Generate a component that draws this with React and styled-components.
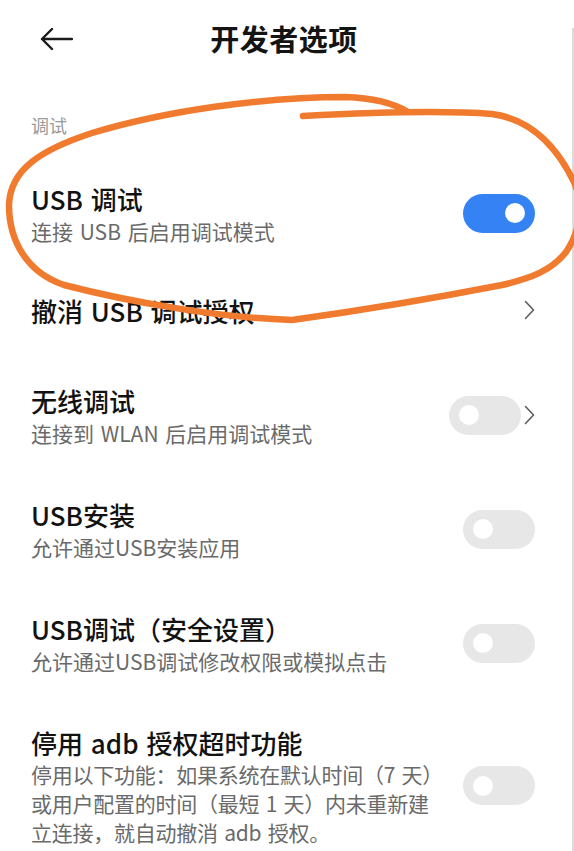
import React from 'react';
import styled, { createGlobalStyle } from 'styled-components';

const Global = createGlobalStyle`
  html, body { margin: 0; padding: 0; background: #ffffff; }
  body { font-family: "Noto Sans CJK SC", "Noto Sans", sans-serif; -webkit-font-smoothing: antialiased; }
  * { box-sizing: border-box; }
`;

const Page = styled.div`
  position: relative;
  width: 574px;
  height: 851px;
  overflow: hidden;
  background: #ffffff;
  color: #111111;
`;

const TopBar = styled.header`
  height: 76px;
  display: grid;
  grid-template-columns: 1fr auto 1fr;
  align-items: center;
  padding: 0 0 0 40px;
`;

const BackButton = styled.button`
  justify-self: start;
  display: flex;
  align-items: center;
  border: 0;
  background: none;
  padding: 0;
  margin-top: 2px;
  color: #1a1a1a;
`;

const Title = styled.h1`
  margin: 0 0 0 -46px;
  font-size: 29px;
  line-height: 40px;
  font-weight: 600;
  letter-spacing: 0.5px;
  color: #141414;
`;

const SectionHeader = styled.div`
  padding: 37px 31px 19px;
  font-size: 18px;
  line-height: 24px;
  color: #9a9a9a;
`;

const Row = styled.div`
  display: flex;
  align-items: center;
  gap: 12px;
  min-height: 88px;
  padding: ${(p) => (p.$single ? '20.5px 39px 28.5px 31px' : '24.5px 39px 24.5px 31px')};
`;

const Texts = styled.div`
  flex: 1;
  min-width: 0;
`;

const RowTitle = styled.div`
  font-size: 26px;
  line-height: 35px;
  font-weight: 500;
  word-spacing: 2px;
  color: #121212;
  white-space: nowrap;
`;

const RowSub = styled.div`
  font-size: 21px;
  line-height: ${(p) => (p.$multi ? '29px' : '30px')};
  letter-spacing: ${(p) => (p.$multi ? '-0.25px' : '0')};
  word-spacing: 2px;
  color: #6a6a6a;
  white-space: nowrap;
`;

const Controls = styled.div`
  display: flex;
  align-items: center;
  gap: 3px;
`;

const Toggle = styled.span`
  position: relative;
  display: block;
  width: 72px;
  height: 39px;
  border-radius: 20px;
  background: ${(p) => (p.$on ? '#3482f4' : '#e7e7e7')};
  &::after {
    content: '';
    position: absolute;
    top: 9.5px;
    ${(p) => (p.$on ? 'right: 10px;' : 'left: 10px;')}
    width: 20px;
    height: 20px;
    border-radius: 50%;
    background: #ffffff;
  }
`;

const EdgeLine = styled.div`
  position: absolute;
  top: 28px;
  right: 0;
  bottom: 0;
  width: 2px;
  background: #dcdcdc;
`;

const Annotation = styled.svg`
  position: absolute;
  left: 0;
  top: 0;
  width: 574px;
  height: 851px;
  pointer-events: none;
`;

const BackArrow = () => (
  <svg width="33" height="24" viewBox="0 0 33 24" fill="none">
    <path d="M2 12 H32 M12 2 L2 12 L12 22" stroke="currentColor" strokeWidth="2.4" strokeLinecap="round" strokeLinejoin="round" />
  </svg>
);

const Chevron = () => (
  <svg width="11" height="20" viewBox="0 0 11 20" fill="none">
    <path d="M1.5 1.5 L9.5 10 L1.5 18.5" stroke="#5e5e5e" strokeWidth="1.6" strokeLinecap="round" strokeLinejoin="round" />
  </svg>
);

const rows = [
  { title: 'USB 调试', sub: ['连接 USB 后启用调试模式'], toggle: true, on: true },
  { title: '撤消 USB 调试授权', sub: [], chevron: true },
  { title: '无线调试', sub: ['连接到 WLAN 后启用调试模式'], toggle: true, on: false, chevron: true },
  { title: 'USB安装', sub: ['允许通过USB安装应用'], toggle: true, on: false },
  { title: 'USB调试（安全设置）', sub: ['允许通过USB调试修改权限或模拟点击'], toggle: true, on: false },
  {
    title: '停用 adb 授权超时功能',
    sub: ['停用以下功能：如果系统在默认时间（7 天）', '或用户配置的时间（最短 1 天）内未重新建', '立连接，就自动撤消 adb 授权。'],
    toggle: true,
    on: false,
  },
];

export default function App() {
  return (
    <Page>
      <Global />
      <TopBar>
        <BackButton aria-label="返回">
          <BackArrow />
        </BackButton>
        <Title>开发者选项</Title>
        <span />
      </TopBar>
      <SectionHeader>调试</SectionHeader>
      {rows.map((r) => (
        <Row key={r.title} $single={r.sub.length === 0}>
          <Texts>
            <RowTitle>{r.title}</RowTitle>
            {r.sub.map((s) => (
              <RowSub key={s} $multi={r.sub.length > 1}>{s}</RowSub>
            ))}
          </Texts>
          <Controls>
            {r.toggle && <Toggle $on={r.on} />}
            {r.chevron && <Chevron />}
          </Controls>
        </Row>
      ))}
      <EdgeLine />
      <Annotation viewBox="0 0 574 851">
        <path
          d="M303 116 C 360 113, 440 110, 492 114 C 530 119, 556 145, 574 182 C 584 205, 580 232, 566 252 C 552 270, 532 278, 502 285 C 430 299, 350 312, 292 320 C 220 318, 130 302, 64 285 C 26 272, 9 240, 9 205 C 10 170, 40 150, 92 133 C 165 111, 262 97, 345 97 C 375 98, 395 104, 408 112"
          stroke="#f07b2f"
          strokeWidth="6.5"
          fill="none"
          strokeLinecap="round"
          strokeLinejoin="round"
        />
      </Annotation>
    </Page>
  );
}
